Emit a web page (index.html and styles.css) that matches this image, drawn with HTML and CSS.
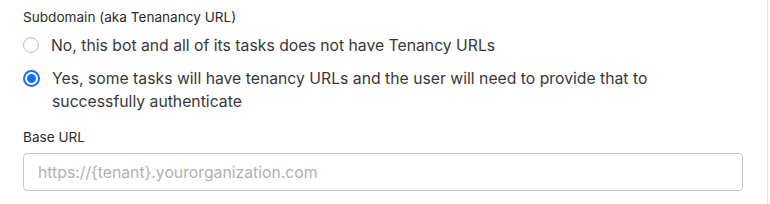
FILE: index.html
```html
<!DOCTYPE html>
<html lang="en">
<head>
  <meta charset="UTF-8" />
  <title>Tenancy settings</title>
  <link rel="stylesheet" href="styles.css">
</head>
<body>
  <div class="panel">
    <div class="field">
      <div class="field-label">Subdomain (aka Tenanancy URL)</div>
      <label class="option">
        <input type="radio" name="tenancy" />
        <span class="dot"></span>
        <span class="option-text">No, this bot and all of its tasks does not have Tenancy URLs</span>
      </label>
      <label class="option">
        <input type="radio" name="tenancy" checked />
        <span class="dot"></span>
        <span class="option-text">Yes, some tasks will have tenancy URLs and the user will need to provide that to successfully authenticate</span>
      </label>
    </div>
    <div class="field">
      <div class="field-label">Base URL</div>
      <input type="text" class="text-input" placeholder="https://{tenant}.yourorganization.com" />
    </div>
  </div>
</body>
</html>
```

FILE: styles.css
```css
body {
  margin: 0;
  font-family: Inter, "Noto Sans", sans-serif;
  background: #fff;
  color: #333;
}
.panel {
  width: 768px;
  height: 204px;
  box-sizing: border-box;
  border-right: 1px solid #e2e2e6;
  padding: 8px 26px 0 23px;
}
.field-label {
  font-size: 13.6px;
  line-height: 18px;
  color: #2b2b2b;
}
.option {
  display: flex;
  align-items: flex-start;
  gap: 12px;
  margin-top: 8px;
  font-size: 15.75px;
  line-height: 23px;
  color: #383838;
  cursor: pointer;
}
.option + .option {
  margin-top: 10px;
}
.option input {
  display: none;
}
.dot {
  flex: none;
  width: 14px;
  height: 14px;
  margin-top: 2.5px;
  border: 1.5px solid #bcbcc2;
  border-radius: 50%;
  position: relative;
}
.option input:checked + .dot {
  width: 13px;
  height: 13px;
  border: 2px solid #1a6cf0;
}
.option input:checked + .dot::after {
  content: "";
  position: absolute;
  top: 2px;
  left: 2px;
  width: 9px;
  height: 9px;
  border-radius: 50%;
  background: #1a6cf0;
}
.option-text {
  max-width: 620px;
}
.field + .field {
  margin-top: 15px;
}
.field .text-input {
  display: block;
  margin-top: 7px;
  width: 720px;
  height: 38px;
  box-sizing: border-box;
  padding: 0 14px;
  border: 1px solid #c8c8cc;
  border-radius: 4px;
  font-family: Inter, "Noto Sans", sans-serif;
  font-size: 15.75px;
  color: #333;
}
.text-input::placeholder {
  color: #b0b0b4;
}
```
